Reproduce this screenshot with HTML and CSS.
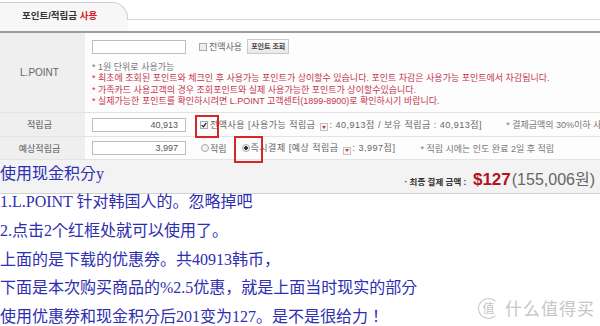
FILE: index.html
```html
<!DOCTYPE html>
<html lang="ko">
<head>
<meta charset="utf-8">
<title>포인트/적립금 사용</title>
<link rel="stylesheet" href="styles.css">
</head>
<body>
<div class="tabbar">
  <div class="tab">포인트/적립금 <em>사용</em></div>
  <div class="tabfill"></div>
</div>
<div class="table">
  <div class="row row-lp">
    <div class="label lp">L.POINT</div>
    <div class="cell">
      <div class="line">
        <span class="field"></span>
        <span class="chk c1"></span><span class="opt">전액사용</span>
        <span class="btn">포인트 조회</span>
      </div>
      <ul class="notes">
        <li class="gray">* 1원 단위로 사용가능</li>
        <li>* 최초에 조회된 포인트와 체크인 후 사용가능 포인트가 상이할수 있습니다. 포인트 차감은 사용가능 포인트에서 차감됩니다.</li>
        <li>* 가족카드 사용고객의 경우 조회포인트와 실제 사용가능한 포인트가 상이할수있습니다.</li>
        <li>* 실제가능한 포인트를 확인하시려면 L.POINT 고객센터(1899-8900)로 확인하시기 바랍니다.</li>
      </ul>
    </div>
  </div>
  <div class="row row-2">
    <div class="label">적립금</div>
    <div class="cell line">
      <span class="field">40,913</span>
      <span class="mark mark1"><span class="chk c2 on"><svg viewBox="0 0 8 8" width="6" height="6"><path d="M1 4.2 L3.2 6.5 L7 1.2" stroke="#222" stroke-width="1.7" fill="none"/></svg></span></span>
      <span class="opt wide">전액사용 [사용가능 적립금 <span class="ico"></span>: 40,913점 / 보유 적립금 : 40,913점]</span>
      <span class="tip t2">* 결제금액의 30%이하 사용가능</span>
    </div>
  </div>
  <div class="row row-3">
    <div class="label">예상적립금</div>
    <div class="cell line">
      <span class="field">3,997</span>
      <span class="radio r1"></span><span class="opt">적립</span>
      <span class="mark mark2"><span class="radio r2 on"></span></span>
      <span class="opt wide">즉시결제 [예상 적립금 <span class="ico"></span>: 3,997점]</span>
      <span class="tip t3">* 적립 시에는 인도 완료 2일 후 적립</span>
    </div>
  </div>
  <div class="band">
    <p class="cn first">使用现金积分y</p>
    <div class="total">
      <span class="tl">· 최종 결제 금액 :</span>
      <span class="usd">$127</span><span class="krw">(155,006원)</span>
    </div>
  </div>
</div>
<div class="cnblock">
  <p class="cn">1.L.POINT 针对韩国人的。忽略掉吧</p>
  <p class="cn">2.点击2个红框处就可以使用了。</p>
  <p class="cn">上面的是下载的优惠券。共40913韩币，</p>
  <p class="cn">下面是本次购买商品的%2.5优惠，就是上面当时现实的部分</p>
  <p class="cn">使用优惠券和现金积分后201变为127。是不是很给力！</p>
</div>
<div class="wm">
  <span class="wm-logo">值</span>
  <span class="wm-text">什么值得买</span>
</div>
</body>
</html>
```
FILE: styles.css
```css
* { box-sizing: border-box; margin: 0; padding: 0; }
html, body { width: 600px; height: 326px; overflow: hidden; background: #fff; }
body {
  position: relative;
  font-family: "Liberation Sans", "Noto Sans CJK KR", sans-serif;
  font-size: 9px;
  color: #666;
}

/* tab */
.tabbar {
  display: flex;
  height: 31px;
  padding-top: 2px;
  background: linear-gradient(#f7f7f7, #f7f7f7) 0 18px / 128px 13px no-repeat;
}
.tab {
  width: 128px;
  height: 18px;
  background: #f7f7f7;
  border-top: 1px solid #cfcfcf;
  border-right: 1px solid #cfcfcf;
  border-top-right-radius: 16px;
  padding-left: 22px;
  font-size: 9.5px;
  font-weight: bold;
  color: #333;
  line-height: 25px;
  white-space: nowrap;
}
.tab em { font-style: normal; color: #d6202e; }
.tabfill { flex: 1; height: 18px; border-bottom: 1px solid #d8d8d8; }

/* table */
.table { border-top: 2px solid #9d9d9d; }
.row {
  display: grid;
  grid-template-columns: 85px 1fr;
  border-bottom: 1px solid #e3e3e3;
}
.label {
  background: #efefef;
  display: flex;
  align-items: center;
  justify-content: center;
  padding-right: 6px;
  color: #555;
}
.label.lp { font-size: 10px; color: #666; }
.cell { padding-left: 7px; background: #fdfdfd; }
.row-lp .cell { padding-top: 6px; padding-bottom: 5px; }
.row-2 .cell { height: 23px; }
.row-3 .cell { height: 22px; }

.line { display: flex; align-items: center; white-space: nowrap; }
.field {
  flex: none;
  width: 94px;
  height: 14px;
  border: 1px solid #bdbdbd;
  background: #fff;
  text-align: right;
  padding-right: 7px;
  line-height: 12px;
  color: #555;
}
.chk {
  flex: none;
  width: 8px;
  height: 8px;
  border: 1px solid #a9a9a9;
  background: #eeeeee;
  display: flex;
  align-items: center;
  justify-content: center;
}
.chk.on { background: #f8f8f8; }
.c1 { margin: 0 2px 0 13px; }
.c2 { margin: 0 2px 0 0; }
.radio {
  flex: none;
  width: 8px;
  height: 8px;
  border-radius: 50%;
  border: 1px solid #aaa;
  background: #f2f2f2;
}
.radio.on { background: radial-gradient(circle, #333 0 1.6px, #f2f2f2 2px); }
.r1 { margin: 0 1px 0 15px; }
.r2 { margin: 0 1px 0 0; }
.opt { color: #666; }
.opt.wide { letter-spacing: 0.5px; }
.btn {
  margin-left: 5px;
  height: 15px;
  padding: 0 3px;
  border: 1px solid #c9c9c9;
  background: linear-gradient(#fbfbfb, #e8e8e8);
  font-size: 7px;
  font-weight: bold;
  color: #444;
  line-height: 13px;
}
.ico {
  display: inline-flex;
  align-items: center;
  justify-content: center;
  width: 8px;
  height: 8px;
  border: 1px solid #c2c2c2;
  background: #f6f6f6;
  margin: 0 2px 0 1px;
  vertical-align: -1px;
}
.ico::after {
  content: "";
  border-left: 2px solid transparent;
  border-right: 2px solid transparent;
  border-top: 3px solid #d33;
}
.tip { color: #777; }
.t2 { margin-left: 24px; }
.t3 { margin-left: 25px; }

/* red annotation frames */
.mark { position: relative; display: flex; }
.mark1 { margin-left: 14px; }
.mark2 { margin-left: 15px; }
.mark::after {
  content: "";
  position: absolute;
  border: 2px solid #d42828;
}
.mark1::after { left: -5px; top: -6px; width: 20px; height: 19px; }
.mark2::after { left: -8px; top: -8px; width: 25px; height: 23px; }

.notes { list-style: none; margin-top: 8px; line-height: 11.3px; color: #c5354f; }
.notes .gray { color: #777; }

/* total band */
.band {
  display: flex;
  justify-content: space-between;
  align-items: flex-start;
  height: 34px;
  background: #f3f3f3;
  border-bottom: 1px solid #d2d2d2;
}
.total { padding: 7px 5px 0 0; line-height: 26px; white-space: nowrap; }
.tl { font-size: 8.5px; font-weight: bold; color: #333; margin-right: 4px; }
.usd { font-size: 17px; font-weight: bold; color: #b5121b; }
.krw { font-size: 16px; color: #666; margin-left: 1px; }

/* chinese annotation */
.cn {
  font-family: "Liberation Serif", "Noto Sans CJK SC", serif;
  font-size: 16px;
  line-height: 28.7px;
  color: #2e2eb0;
  white-space: nowrap;
}
.cn.first { line-height: 28px; }
.cnblock { margin-top: -6px; }

/* watermark */
.wm {
  position: absolute;
  right: 5px;
  top: 297px;
  display: flex;
  align-items: center;
  gap: 6px;
  color: #c6c6c6;
  font-family: "Noto Sans CJK SC", sans-serif;
}
.wm-logo {
  width: 21px;
  height: 21px;
  border: 1.5px solid #c6c6c6;
  border-right-color: transparent;
  border-radius: 50%;
  display: flex;
  align-items: center;
  justify-content: center;
  font-size: 12px;
  line-height: 1;
}
.wm-text { font-size: 17px; line-height: 22px; letter-spacing: 1px; }
```
